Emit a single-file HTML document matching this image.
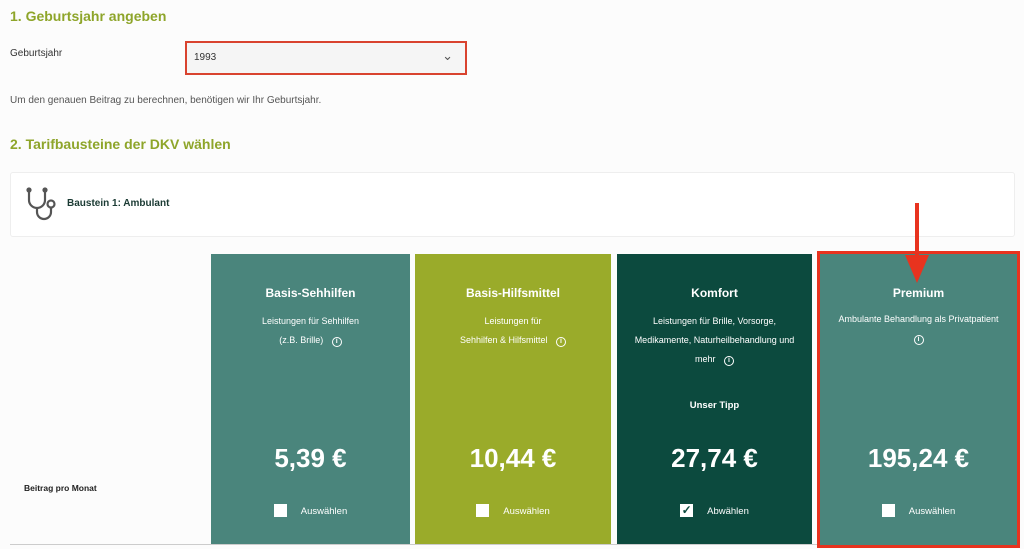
<!DOCTYPE html>
<html><head><meta charset="utf-8"><style>
*{margin:0;padding:0;box-sizing:border-box}
body{width:1024px;height:549px;background:#fcfcfc;font-family:"Liberation Sans",sans-serif;position:relative;overflow:hidden;color:#333}
.abs{position:absolute}
h2{position:absolute;font-size:14px;font-weight:bold;color:#8ea52a}
.card{position:absolute;top:254px;height:290px;color:#fff;text-align:center}
.t{position:absolute;top:32px;left:0;right:0;font-weight:bold;font-size:12px}
.d{position:absolute;top:58px;left:0;right:0;font-size:9px;line-height:19px}
.p{position:absolute;top:189px;left:0;right:0;font-weight:bold;font-size:26px}
.c{position:absolute;top:251px;left:0;right:0;font-size:9.5px}
.cb{display:inline-block;width:13px;height:13px;background:#fff;vertical-align:middle;margin-right:14px;position:relative;top:-1px}
.i{display:inline-block;width:10px;height:10px;border:1px solid #fff;border-radius:50%;font-size:7px;line-height:8px;margin-left:6px;font-weight:bold}
</style></head><body>
<h2 style="left:10px;top:8px">1. Geburtsjahr angeben</h2>
<div class="abs" style="left:10px;top:48px;font-size:10px">Geburtsjahr</div>
<div class="abs" style="left:185px;top:41px;width:282px;height:34px;border:2px solid #d9432f;background:#f5f5f5;font-size:10px;padding:9px 7px">1993<span style="position:absolute;right:12px;top:5px;font-size:13px;color:#555">&#8964;</span></div>
<div class="abs" style="left:10px;top:95px;font-size:10px;color:#555">Um den genauen Beitrag zu berechnen, benötigen wir Ihr Geburtsjahr.</div>
<h2 style="left:10px;top:136px">2. Tarifbausteine der DKV wählen</h2>
<div class="abs" style="left:10px;top:172px;width:1005px;height:65px;background:#fff;border:1px solid #eee;border-radius:3px"></div>
<svg class="abs" style="left:25px;top:187px" width="36" height="36" viewBox="0 0 36 36" fill="none" stroke="#555" stroke-width="2.2"><path d="M4 3v10a8 8 0 0 0 16 0V3"/><path d="M12 21v4a7 7 0 0 0 14 0v-4"/><circle cx="26" cy="17" r="3.5"/><circle cx="4" cy="3" r="1.5" fill="#555"/><circle cx="20" cy="3" r="1.5" fill="#555"/></svg>
<div class="abs" style="left:67px;top:198px;font-size:10px;font-weight:bold;color:#1a3a33">Baustein 1: Ambulant</div>
<div class="abs" style="left:24px;top:483px;font-size:8.5px;font-weight:bold;color:#222">Beitrag pro Monat</div>
<div class="abs" style="left:10px;top:544px;width:810px;height:1px;background:#ccc"></div>

<div class="card" style="left:211px;width:199px;background:#4a857c"><div class="t">Basis-Sehhilfen</div><div class="d">Leistungen für Sehhilfen<br>(z.B. Brille) <span class="i">i</span></div><div class="p">5,39 €</div><div class="c"><span class="cb"></span>Auswählen</div></div>
<div class="card" style="left:415px;width:196px;background:#9aab2a"><div class="t">Basis-Hilfsmittel</div><div class="d">Leistungen für<br>Sehhilfen &amp; Hilfsmittel <span class="i">i</span></div><div class="p">10,44 €</div><div class="c"><span class="cb"></span>Auswählen</div></div>
<div class="card" style="left:617px;width:195px;background:#0c4a3e"><div class="t">Komfort</div><div class="d" style="line-height:19px">Leistungen für Brille, Vorsorge,<br>Medikamente, Naturheilbehandlung und<br>mehr <span class="i">i</span></div><div class="abs" style="top:146px;left:0;right:0;font-size:9.5px;font-weight:bold">Unser Tipp</div><div class="p">27,74 €</div><div class="c"><span class="cb" style="color:#0c4a3e;font-size:12px;line-height:13px;font-weight:bold">✓</span>Abwählen</div></div>
<div class="card" style="left:817px;top:251px;width:203px;height:297px;background:#4a857c;border:3px solid #e8331f"><div class="t" style="top:32px">Premium</div><div class="d" style="top:56px">Ambulante Behandlung als Privatpatient<br><span class="i" style="margin:0">i</span></div><div class="p" style="top:189px">195,24 €</div><div class="c" style="top:251px"><span class="cb"></span>Auswählen</div></div>
<svg class="abs" style="left:900px;top:203px" width="34" height="82"><line x1="17" y1="0" x2="17" y2="55" stroke="#e8331f" stroke-width="4"/><polygon points="5,52 29,52 17,80" fill="#e8331f"/></svg>
</body></html>
